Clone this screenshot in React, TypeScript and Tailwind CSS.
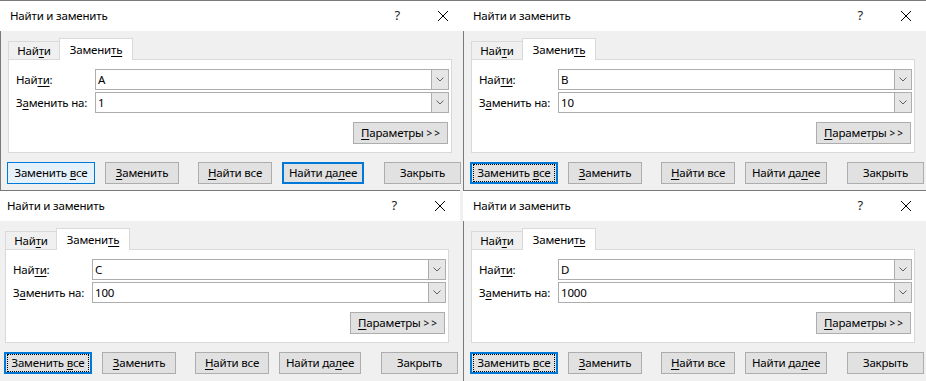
import React from "react";

type Look = "normal" | "hover" | "default" | "focus";

const looks: Record<Look, string> = {
  normal: "border border-[#adadad] bg-[#e1e1e1]",
  hover: "border border-[#0078d7] bg-[#e5f1fb]",
  default: "border-2 border-[#0078d7] bg-[#e1e1e1]",
  focus: "border-2 border-[#0078d7] bg-[#e1e1e1]",
};

function Btn({ look = "normal", className = "", children }: { look?: Look; className?: string; children: React.ReactNode }) {
  return (
    <div className={`flex h-[22px] items-center justify-center text-black ${looks[look]} ${className}`}>
      {look === "focus" ? (
        <span className="m-[1px] flex h-full w-full items-center justify-center border border-dotted border-black">
          <span>{children}</span>
        </span>
      ) : (
        <span>{children}</span>
      )}
    </div>
  );
}

const U = ({ children }: { children: React.ReactNode }) => (
  <span className="underline decoration-1 underline-offset-[2px]">{children}</span>
);

function Combo({ value }: { value: string }) {
  return (
    <div className="flex h-[21px] w-[354px] border border-[#adadad] bg-white">
      <div className="flex-1 pl-[2px] leading-[19px]">{value}</div>
      <div className="flex w-[17px] items-center justify-center border-l border-[#adadad] bg-[#e6e6e6]">
        <svg width="8" height="5" viewBox="0 0 8 5" fill="none">
          <path d="M0.5 0.5 L4 4 L7.5 0.5" stroke="#606060" strokeWidth="1" />
        </svg>
      </div>
    </div>
  );
}

function Dialog({ find, repl, focused, shift = "" }: { find: string; repl: string; focused: boolean; shift?: string }) {
  return (
    <div className={`flex h-full w-[463px] flex-col ${shift}`}>
      {/* title bar */}
      <div className="flex h-[31px] items-center border-t border-[#7a7a7a] bg-white pl-[10px]">
        <span className="flex-1">Найти и заменить</span>
        <span className="mr-[38px] text-[13px] text-[#222]">?</span>
        <svg className="mr-[15px]" width="10" height="10" viewBox="0 0 10 10">
          <path d="M0 0 L10 10 M10 0 L0 10" stroke="#000" strokeWidth="1" />
        </svg>
      </div>

      <div className="flex flex-1 flex-col border-l border-[#7a7a7a] bg-[#f0f0f0] pl-[7px] pt-[7px]">
        {/* tabs */}
        <div className="flex h-[21px] items-end">
          <div className="flex h-[18px] w-[52px] items-center justify-center border border-b-0 border-[#d9d9d9]">
            <span>
              Най<U>т</U>и
            </span>
          </div>
          <div className="relative z-10 -mb-px -ml-px flex h-[22px] w-[74px] items-center justify-center border border-b-0 border-[#d9d9d9] bg-white">
            <span>
              Замени<U>ть</U>
            </span>
          </div>
        </div>

        {/* panel */}
        <div className="flex h-[94px] w-[444px] flex-col border border-[#d9d9d9] bg-white pl-[7px] pt-[9px]">
          <div className="flex items-center">
            <span className="w-[79px]">
              Най<U>ти</U>:
            </span>
            <Combo value={find} />
          </div>
          <div className="mt-[2px] flex items-center">
            <span className="w-[79px]">
              З<U>а</U>менить на:
            </span>
            <Combo value={repl} />
          </div>
          <div className="mt-[9px] flex justify-end pr-[3px]">
            <Btn className="w-[95px]">
              <U>П</U>араметры <span className="text-[10px]">&gt; &gt;</span>
            </Btn>
          </div>
        </div>

        {/* buttons */}
        <div className="-ml-px mt-[9px] flex">
          <Btn look={focused ? "focus" : "hover"} className="w-[88px]">
            Заменить <U>в</U>се
          </Btn>
          <Btn className="ml-[10px] w-[74px]">
            <U>З</U>аменить
          </Btn>
          <Btn className="ml-[19px] w-[74px]">
            <U>Н</U>айти все
          </Btn>
          <Btn look={focused ? "normal" : "default"} className="ml-[10px] w-[82px]">
            Найти да<U>л</U>ее
          </Btn>
          <Btn className="ml-[20px] w-[77px]">Закрыть</Btn>
        </div>
      </div>
    </div>
  );
}

export default function App() {
  return (
    <div className="grid h-[381px] w-[926px] grid-cols-[463px_463px] grid-rows-[190px_191px] overflow-hidden bg-[#f0f0f0] font-['Segoe_UI','Noto_Sans',sans-serif] text-[11.5px] tracking-[-0.2px] text-black">
      <Dialog find="A" repl="1" focused={false} />
      <Dialog find="B" repl="10" focused />
      <Dialog find="C" repl="100" focused shift="-ml-[3px]" />
      <Dialog find="D" repl="1000" focused />
    </div>
  );
}
